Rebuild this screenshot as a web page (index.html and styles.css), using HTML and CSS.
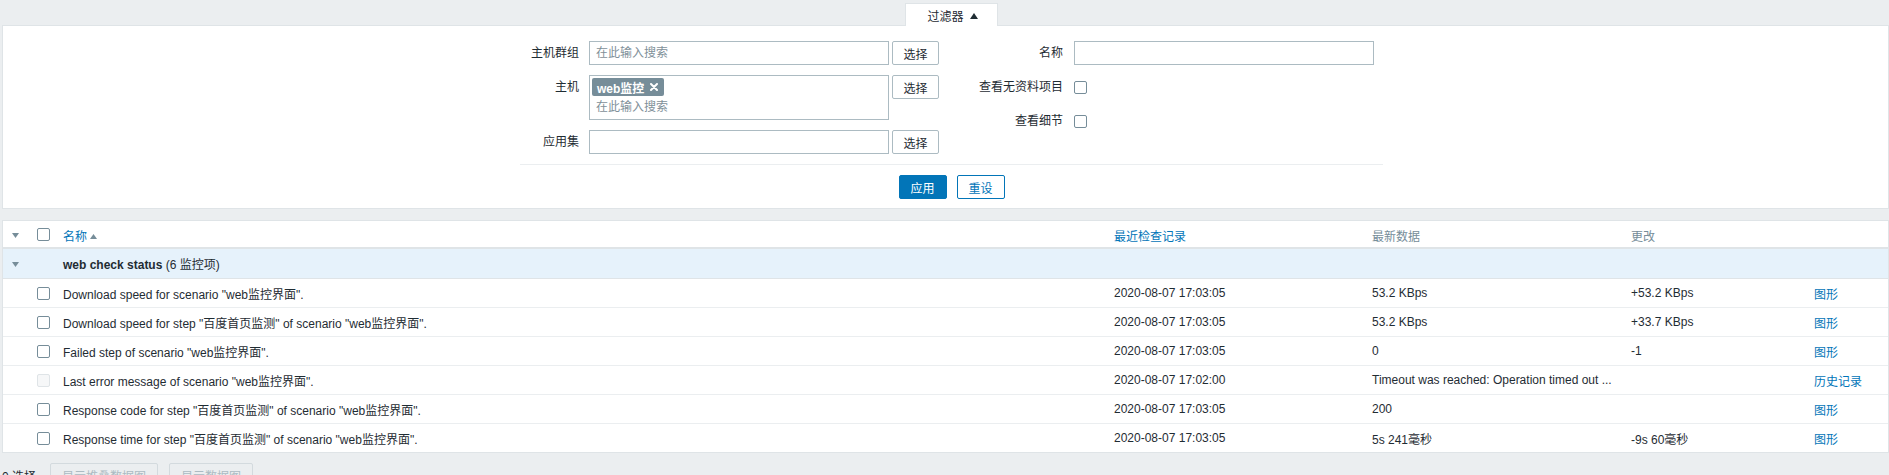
FILE: index.html
```html
<!DOCTYPE html>
<html lang="zh">
<head>
<meta charset="utf-8">
<title>最新数据</title>
<link rel="stylesheet" href="styles.css">
</head>
<body>
<div class="page">
  <div class="filter">
    <div class="tabs">
      <div class="tab"><span>过滤器</span><svg class="tab-arrow" width="8" height="6" viewBox="0 0 8 6"><polygon points="0,6 8,6 4,0" fill="#1f2c33"/></svg></div>
    </div>
    <div class="filter-body">
      <div class="filter-inner">
        <div class="form">
          <div class="col-left">
            <div class="row">
              <label class="lbl-l">主机群组</label>
              <input class="inp" type="text" placeholder="在此输入搜索">
              <button class="btn-sel">选择</button>
            </div>
            <div class="row">
              <label class="lbl-l">主机</label>
              <div class="ms">
                <div class="ms-tags"><span class="tag"><span class="tag-text">web监控</span><svg class="tag-x" width="8" height="8" viewBox="0 0 8 8"><path d="M1 1 L7 7 M7 1 L1 7" stroke="#fff" stroke-width="2" stroke-linecap="round"/></svg></span></div>
                <input class="ms-inp" type="text" placeholder="在此输入搜索">
              </div>
              <button class="btn-sel">选择</button>
            </div>
            <div class="row">
              <label class="lbl-l">应用集</label>
              <input class="inp" type="text">
              <button class="btn-sel">选择</button>
            </div>
          </div>
          <div class="col-right">
            <div class="row">
              <label class="lbl-r">名称</label>
              <input class="inp" type="text">
            </div>
            <div class="row row-cb">
              <label class="lbl-r">查看无资料项目</label>
              <span class="cb"></span>
            </div>
            <div class="row row-cb">
              <label class="lbl-r">查看细节</label>
              <span class="cb"></span>
            </div>
          </div>
        </div>
        <div class="sep"></div>
        <div class="filter-buttons">
          <button class="btn-apply">应用</button>
          <button class="btn-reset">重设</button>
        </div>
      </div>
    </div>
  </div>

  <table class="list">
    <thead>
      <tr>
        <th class="c-arrow"><svg class="tri-down" width="7" height="5" viewBox="0 0 7 5"><polygon points="0,0 7,0 3.5,5" fill="#768d99"/></svg></th>
        <th class="c-cb"><span class="cb"></span></th>
        <th class="c-name"><a class="link">名称</a><svg class="tri-up" width="7" height="5" viewBox="0 0 7 5"><polygon points="0,5 7,5 3.5,0" fill="#768d99"/></svg></th>
        <th class="c-date"><a class="link">最近检查记录</a></th>
        <th class="c-data muted">最新数据</th>
        <th class="c-change muted">更改</th>
        <th class="c-act"></th>
      </tr>
    </thead>
    <tbody>
      <tr class="group">
        <td class="c-arrow"><svg class="tri-down" width="7" height="5" viewBox="0 0 7 5"><polygon points="0,0 7,0 3.5,5" fill="#768d99"/></svg></td>
        <td></td>
        <td colspan="5"><b>web check status</b> (6 监控项)</td>
      </tr>
      <tr>
        <td></td><td><span class="cb"></span></td>
        <td>Download speed for scenario "web监控界面".</td>
        <td>2020-08-07 17:03:05</td>
        <td>53.2 KBps</td>
        <td>+53.2 KBps</td>
        <td><a class="link">图形</a></td>
      </tr>
      <tr>
        <td></td><td><span class="cb"></span></td>
        <td>Download speed for step "百度首页监测" of scenario "web监控界面".</td>
        <td>2020-08-07 17:03:05</td>
        <td>53.2 KBps</td>
        <td>+33.7 KBps</td>
        <td><a class="link">图形</a></td>
      </tr>
      <tr>
        <td></td><td><span class="cb"></span></td>
        <td>Failed step of scenario "web监控界面".</td>
        <td>2020-08-07 17:03:05</td>
        <td>0</td>
        <td>-1</td>
        <td><a class="link">图形</a></td>
      </tr>
      <tr>
        <td></td><td><span class="cb cb-dis"></span></td>
        <td>Last error message of scenario "web监控界面".</td>
        <td>2020-08-07 17:02:00</td>
        <td>Timeout was reached: Operation timed out ...</td>
        <td></td>
        <td><a class="link">历史记录</a></td>
      </tr>
      <tr>
        <td></td><td><span class="cb"></span></td>
        <td>Response code for step "百度首页监测" of scenario "web监控界面".</td>
        <td>2020-08-07 17:03:05</td>
        <td>200</td>
        <td></td>
        <td><a class="link">图形</a></td>
      </tr>
      <tr class="last">
        <td></td><td><span class="cb"></span></td>
        <td>Response time for step "百度首页监测" of scenario "web监控界面".</td>
        <td>2020-08-07 17:03:05</td>
        <td>5s 241毫秒</td>
        <td>-9s 60毫秒</td>
        <td><a class="link">图形</a></td>
      </tr>
    </tbody>
  </table>

  <div class="actions">
    <span class="sel-count">0 选择</span>
    <button class="btn-dis" disabled>显示堆叠数据图</button>
    <button class="btn-dis" disabled>显示数据图</button>
  </div>
</div>
</body>
</html>
```

FILE: styles.css
```css
* { box-sizing: border-box; }

html, body {
  margin: 0;
  height: 475px;
  overflow: hidden;
}

body {
  background: #ebeef0;
  font-family: "Liberation Sans", Arial, "Noto Sans CJK SC", sans-serif;
  font-size: 12px;
  color: #1f2c33;
}

.page {
  padding: 3px 0 0 2px;
}

button, input {
  font-family: inherit;
  font-size: 12px;
}

/* ---------- filter ---------- */
.tabs {
  display: flex;
  justify-content: center;
  padding-left: 12px;
}

.tab {
  position: relative;
  z-index: 1;
  width: 93px;
  height: 23px;
  margin-bottom: -1px;
  background: #fff;
  border: 1px solid #dfe4e7;
  border-bottom: none;
  display: flex;
  align-items: center;
  justify-content: center;
  gap: 6px;
  padding-left: 2px;
  padding-top: 1px;
}

.tab-arrow { display: block; }

.filter-body {
  background: #fff;
  border: 1px solid #dfe4e7;
  padding: 15px 0 9px 12px;
}

.filter-inner {
  width: 863px;
  margin: 0 auto;
}

.form {
  display: flex;
}

.col-left { width: 419px; }
.col-right { width: 444px; }

.row {
  display: flex;
  align-items: flex-start;
}

.row + .row { margin-top: 10px; }

.row-cb { align-items: center; height: 24px; }

.lbl-l, .lbl-r {
  text-align: right;
  line-height: 24px;
  flex: none;
}

.lbl-l { width: 69px; padding-right: 10px; }
.lbl-r { width: 135px; padding-right: 11px; }

.inp {
  width: 300px;
  height: 24px;
  border: 1px solid #acbbc2;
  border-radius: 0;
  padding: 0 6px;
  color: #1f2c33;
  outline: none;
  background: #fff;
  margin: 0;
}

.inp::placeholder, .ms-inp::placeholder { color: #7f9099; }

.btn-sel {
  margin: 0 0 0 3px;
  width: 47px;
  height: 24px;
  border: 1px solid #acbbc2;
  border-radius: 2px;
  background: #fff;
  color: #1f2c33;
  padding: 0;
}

.ms {
  width: 300px;
  height: 45px;
  border: 1px solid #acbbc2;
  padding: 2px 2px 0 2px;
  background: #fff;
}

.ms-tags { display: flex; height: 18px; }

.tag {
  display: inline-flex;
  align-items: center;
  height: 18px;
  padding: 0 6px 0 5px;
  background: #768d99;
  color: #fff;
  font-weight: bold;
  border-radius: 2px;
  gap: 6px;
}

.tag-x { display: block; }

.ms-inp {
  display: block;
  width: 100%;
  height: 22px;
  border: none;
  padding: 0 4px;
  margin: 0;
  outline: none;
  color: #1f2c33;
}

.cb {
  display: inline-block;
  width: 13px;
  height: 13px;
  border: 1px solid #768d99;
  border-radius: 2px;
  background: #fff;
  vertical-align: middle;
}

.cb-dis {
  border-color: #dfe4e7;
  background: #f6f7f8;
}

.sep {
  margin-top: 10px;
  border-top: 1px solid #ebeef0;
}

.filter-buttons {
  display: flex;
  justify-content: center;
  gap: 10px;
  margin-top: 10px;
}

.btn-apply, .btn-reset {
  width: 48px;
  height: 24px;
  border-radius: 2px;
  padding: 0;
  margin: 0;
}

.btn-apply {
  background: #0275b8;
  border: 1px solid #0275b8;
  color: #fff;
}

.btn-reset {
  background: #fff;
  border: 1px solid #0275b8;
  color: #0275b8;
}

/* ---------- table ---------- */
.list {
  width: 100%;
  margin-top: 11px;
  border-collapse: separate;
  border-spacing: 0;
  table-layout: fixed;
  background: #fff;
  border: 1px solid #dfe4e7;
}

.list th, .list td {
  padding: 0 5px;
  text-align: left;
  white-space: nowrap;
  overflow: hidden;
}

.list th {
  height: 28px;
  font-weight: normal;
  border-bottom: 2px solid #dfe4e7;
  vertical-align: middle;
  padding-top: 2px;
}

.list td {
  height: 29px;
  border-bottom: 1px solid #ebeef0;
  vertical-align: middle;
}

.list tr.group td {
  height: 30px;
  background: #e6f2fb;
  border-bottom: 1px solid #dfe4e7;
}

.list tr.last td { border-bottom: none; height: 28px; }

.list .c-arrow { width: 29px; padding-left: 9px; }
.list .c-cb { width: 26px; }
.list .c-name { width: 1051px; }
.list .c-date { width: 258px; }
.list .c-data { width: 259px; }
.list .c-change { width: 183px; }

.list th .cb { margin-top: -2px; }

.tri-down, .tri-up { display: inline-block; vertical-align: middle; }
.tri-up { margin-left: 3px; margin-top: -2px; }

.link { color: #0275b8; text-decoration: none; cursor: pointer; }
.muted { color: #768d99; }

/* ---------- actions ---------- */
.actions {
  display: flex;
  align-items: center;
  margin-top: 10px;
}

.sel-count { width: 48px; flex: none; }

.btn-dis {
  height: 24px;
  padding: 0 11px;
  margin: 0 11px 0 0;
  border: 1px solid #d3dade;
  border-radius: 2px;
  background: #ebeef0;
  color: #acbbc2;
}
```
